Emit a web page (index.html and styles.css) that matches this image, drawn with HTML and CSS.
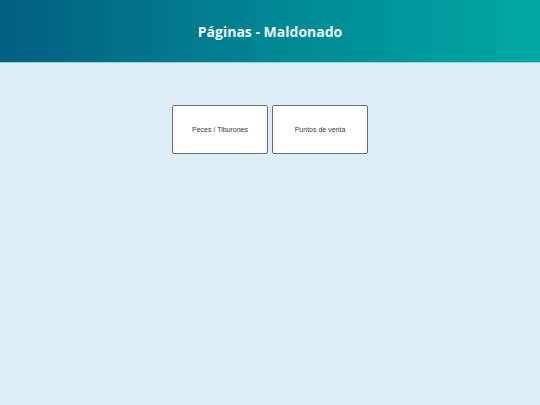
FILE: index.html
```html
<!DOCTYPE html>
<html lang="es">
<head>
<meta charset="utf-8">
<title>Páginas - Maldonado</title>
<link rel="stylesheet" href="styles.css">
</head>
<body>
<header class="header">
  <h1 class="title">Páginas - Maldonado</h1>
</header>
<main class="content">
  <div class="cards">
    <a class="card" href="#">Peces / Tiburones</a>
    <a class="card" href="#">Puntos de venta</a>
  </div>
</main>
</body>
</html>
```
FILE: styles.css
```css
html, body {
  margin: 0;
  padding: 0;
  height: 100%;
}
body {
  background: #ddedf8;
  font-family: "Liberation Sans", Arial, sans-serif;
}
.header {
  height: 62px;
  background: linear-gradient(90deg, #035e80 0%, #018a96 55%, #00a8a2 100%);
  border-bottom: 1px solid #8fd6df;
  display: flex;
  align-items: center;
  justify-content: center;
}
.title {
  margin: 0;
  color: #eefafc;
  font-family: "Open Sans", "Noto Sans", sans-serif;
  font-weight: 700;
  font-size: 14px;
  letter-spacing: 0;
}
.content {
  padding-top: 42px;
}
.cards {
  display: flex;
  justify-content: center;
  gap: 4px;
}
.card {
  box-sizing: border-box;
  width: 96px;
  height: 49px;
  background: #ffffff;
  border: 1px solid #6b6f75;
  border-radius: 2px;
  display: flex;
  align-items: center;
  justify-content: center;
  color: #333a44;
  font-size: 7px;
  text-decoration: none;
}
```
